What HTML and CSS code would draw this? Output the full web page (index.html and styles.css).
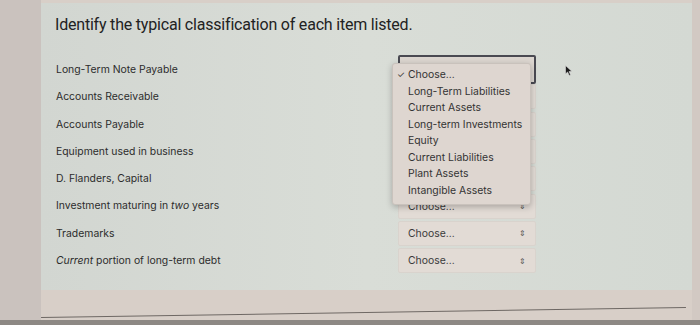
FILE: index.html
```html
<!DOCTYPE html>
<html lang="en">
<head>
    <meta charset="UTF-8">
    <meta name="viewport" content="width=device-width, initial-scale=1.0">
    <title>Classification Question</title>
    <link rel="stylesheet" href="styles.css">
</head>
<body>
    <div class="screen">
        <div class="side"></div>
        <div class="main">
            <div class="panel">
                <h1>Identify the typical classification of each item listed.</h1>

                <!-- Items and their answer dropdowns -->
                <div class="rows">
                    <div class="label">Long-Term Note Payable</div>
                    <div class="select-cell">
                        <div class="select focused"></div>
                        <!-- Open dropdown menu -->
                        <div class="menu">
                            <div class="option checked"><span class="check">&#10003;</span>Choose...</div>
                            <div class="option">Long-Term Liabilities</div>
                            <div class="option">Current Assets</div>
                            <div class="option">Long-term Investments</div>
                            <div class="option">Equity</div>
                            <div class="option">Current Liabilities</div>
                            <div class="option">Plant Assets</div>
                            <div class="option">Intangible Assets</div>
                        </div>
                    </div>

                    <!-- these four are hidden behind the open menu -->
                    <div class="label">Accounts Receivable</div>
                    <div class="select-cell"><div class="select"></div></div>

                    <div class="label">Accounts Payable</div>
                    <div class="select-cell"><div class="select"></div></div>

                    <div class="label">Equipment used in business</div>
                    <div class="select-cell"><div class="select"></div></div>

                    <div class="label">D. Flanders, Capital</div>
                    <div class="select-cell"><div class="select"></div></div>

                    <div class="label">Investment maturing in <em>two</em> years</div>
                    <div class="select-cell"><div class="select">Choose...<span class="arrows">&#8661;</span></div></div>

                    <div class="label">Trademarks</div>
                    <div class="select-cell"><div class="select">Choose...<span class="arrows">&#8661;</span></div></div>

                    <div class="label"><em>Current</em> portion of long-term debt</div>
                    <div class="select-cell"><div class="select">Choose...<span class="arrows">&#8661;</span></div></div>
                </div>

                <!-- Mouse pointer -->
                <svg class="cursor" width="8" height="11" viewBox="0 0 8 11">
                    <path d="M0.5 0.5 L0.5 9 L2.6 7 L4.2 10.5 L5.6 9.9 L4.1 6.5 L7 6.5 Z" fill="#1c1c1c" stroke="#ddd" stroke-width="0.6"/>
                </svg>
            </div>
            <div class="below">
                <div class="rule"></div>
            </div>
        </div>
        <div class="side right"></div>
    </div>
    <div class="bottom-bar"></div>
</body>
</html>
```
FILE: styles.css
```css
/* Page styles */
body {
    margin: 0;
    padding: 0;
    width: 700px;
    height: 325px;
    overflow: hidden;
    background-color: #d8cfc8;
    font-family: Inter, "Noto Sans", sans-serif;
}
.screen {
    display: flex;
    height: 320px;
}
.side {
    width: 41px;
    background-color: #cac2be;
}
.side.right {
    width: 8px;
    background-color: #d2c9c3;
}
.main {
    flex: 1;
    display: flex;
    flex-direction: column;
    padding-top: 3px;
    background-color: #d8cfc8;
}
.panel {
    position: relative;
    height: 287px;
    background-color: #d6dad4;
    background-image: linear-gradient(90deg, #d2d6d1 0%, #d9ddd7 50%, #d4d9d3 100%);
    padding: 12px 0 0 14px;
    box-sizing: border-box;
}
h1 {
    margin: 0;
    font-family: Roboto, Arial, sans-serif;
    font-size: 16px;
    font-weight: 400;
    letter-spacing: -0.2px;
    color: #222;
}
.rows {
    display: grid;
    grid-template-columns: 343px 138px;
    grid-auto-rows: 27.3px;
    margin-top: 22px;
}
.label {
    line-height: 27.3px;
    padding-left: 1px;
    font-size: 10.4px;
    color: #2c2c2c;
    white-space: nowrap;
}
.label em {
    font-style: italic;
}
.select-cell {
    position: relative;
    display: flex;
    align-items: center;
}
.select {
    position: relative;
    width: 138px;
    height: 25px;
    box-sizing: border-box;
    padding-left: 9px;
    display: flex;
    align-items: center;
    background-color: #e2dbd5;
    border: 1px solid #d9d3cd;
    border-radius: 2px;
    font-size: 10.4px;
    color: #3a3a3a;
}
.select.focused {
    height: 29px;
    border: 2px solid #4a4a52;
    background-color: #dcd6d0;
}
.arrows {
    position: absolute;
    right: 9px;
    font-size: 8px;
    color: #555;
}
.menu {
    position: absolute;
    left: -6px;
    top: 7px;
    width: 139px;
    padding: 3px 0 5px;
    box-sizing: border-box;
    background-color: #ded6d0;
    border: 1px solid #c9c2bc;
    border-radius: 3px;
    box-shadow: 0 2px 6px rgba(0, 0, 0, 0.25);
    z-index: 2;
}
.option {
    position: relative;
    height: 16.5px;
    line-height: 16.5px;
    padding-left: 15px;
    font-size: 10.4px;
    color: #333;
}
.check {
    position: absolute;
    left: 4px;
    font-size: 9px;
}
.cursor {
    position: absolute;
    left: 524px;
    top: 62px;
}
.below {
    flex: 1;
    position: relative;
}
.rule {
    position: absolute;
    left: 0;
    right: 6px;
    top: 22px;
    border-top: 1px solid #6e6864;
    transform: rotate(-0.9deg);
}
.bottom-bar {
    height: 5px;
    background-color: #8d8884;
}
```
